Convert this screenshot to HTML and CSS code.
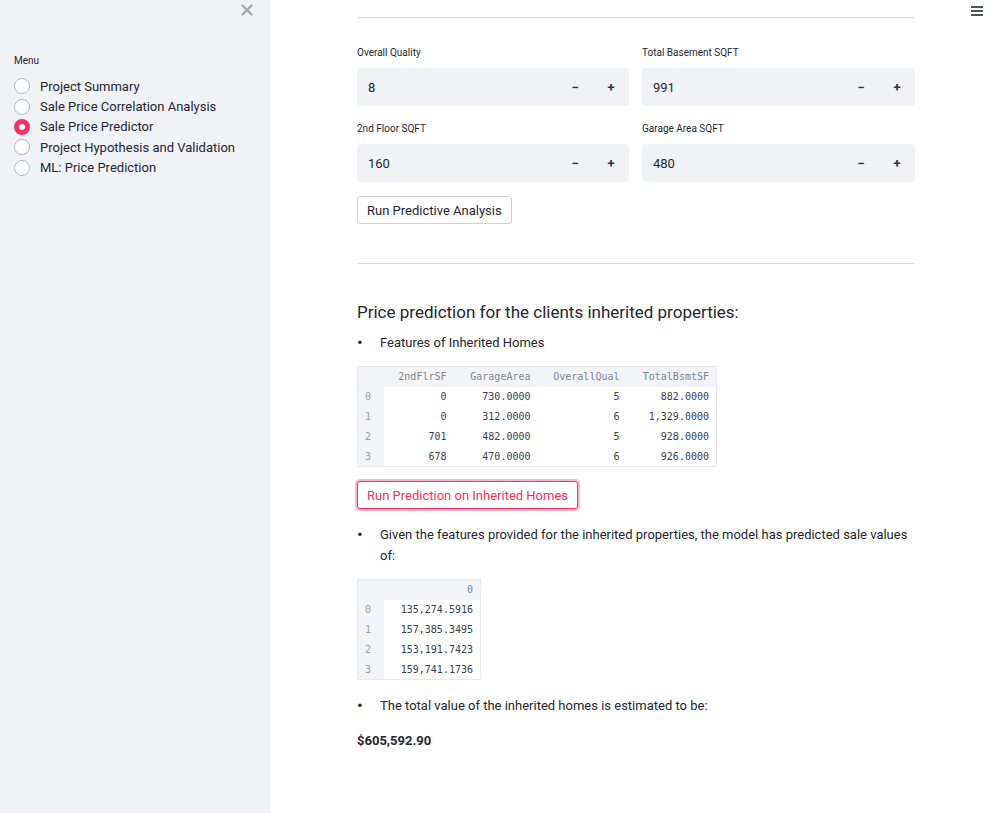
FILE: index.html
```html
<!DOCTYPE html>
<html>
<head>
<meta charset="utf-8">
<link rel="stylesheet" href="styles.css">
</head>
<body>
<div class="app">
  <aside class="sidebar">
    <div class="close-row">
      <svg class="close" width="12" height="12" viewBox="0 0 12 12"><path d="M1.5 1.5 L10.5 10.5 M10.5 1.5 L1.5 10.5" stroke="#a3a8b8" stroke-width="2.4" stroke-linecap="round"/></svg>
    </div>
    <div class="menu-label">Menu</div>
    <div class="radios">
      <div class="radio"><span class="dot"></span><span>Project Summary</span></div>
      <div class="radio"><span class="dot"></span><span>Sale Price Correlation Analysis</span></div>
      <div class="radio"><span class="dot active"></span><span>Sale Price Predictor</span></div>
      <div class="radio"><span class="dot"></span><span>Project Hypothesis and Validation</span></div>
      <div class="radio"><span class="dot"></span><span>ML: Price Prediction</span></div>
    </div>
  </aside>
  <main class="main">
    <div class="hamburger"><span></span><span></span><span></span></div>
    <div class="content">
      <hr class="rule first">
      <div class="grid">
        <div class="field">
          <div class="label">Overall Quality</div>
          <div class="numinput"><div class="val">8</div><div class="step">−</div><div class="step">+</div></div>
        </div>
        <div class="field">
          <div class="label">Total Basement SQFT</div>
          <div class="numinput"><div class="val">991</div><div class="step">−</div><div class="step">+</div></div>
        </div>
        <div class="field">
          <div class="label">2nd Floor SQFT</div>
          <div class="numinput"><div class="val">160</div><div class="step">−</div><div class="step">+</div></div>
        </div>
        <div class="field">
          <div class="label">Garage Area SQFT</div>
          <div class="numinput"><div class="val">480</div><div class="step">−</div><div class="step">+</div></div>
        </div>
      </div>
      <button class="btn">Run Predictive Analysis</button>
      <hr class="rule second">
      <h3 class="heading">Price prediction for the clients inherited properties:</h3>
      <div class="bullet b1"><span class="mark">•</span><span>Features of Inherited Homes</span></div>
      <table class="df df1">
        <thead><tr><th class="idx"></th><th>2ndFlrSF</th><th>GarageArea</th><th>OverallQual</th><th>TotalBsmtSF</th></tr></thead>
        <tbody>
          <tr><th class="idx">0</th><td>0</td><td>730.0000</td><td>5</td><td>882.0000</td></tr>
          <tr><th class="idx">1</th><td>0</td><td>312.0000</td><td>6</td><td>1,329.0000</td></tr>
          <tr><th class="idx">2</th><td>701</td><td>482.0000</td><td>5</td><td>928.0000</td></tr>
          <tr><th class="idx">3</th><td>678</td><td>470.0000</td><td>6</td><td>926.0000</td></tr>
        </tbody>
      </table>
      <button class="btn btn-pink">Run Prediction on Inherited Homes</button>
      <div class="bullet b2"><span class="mark">•</span><span>Given the features provided for the inherited properties, the model has predicted sale values of:</span></div>
      <table class="df df2">
        <thead><tr><th class="idx"></th><th>0</th></tr></thead>
        <tbody>
          <tr><th class="idx">0</th><td>135,274.5916</td></tr>
          <tr><th class="idx">1</th><td>157,385.3495</td></tr>
          <tr><th class="idx">2</th><td>153,191.7423</td></tr>
          <tr><th class="idx">3</th><td>159,741.1736</td></tr>
        </tbody>
      </table>
      <div class="bullet b3"><span class="mark">•</span><span>The total value of the inherited homes is estimated to be:</span></div>
      <div class="total">$605,592.90</div>
    </div>
  </main>
</div>
</body>
</html>
```

FILE: styles.css
```css
* { box-sizing: border-box; }
html, body { margin: 0; padding: 0; height: 100%; }
body {
  font-family: Roboto, "Noto Sans", "Liberation Sans", sans-serif;
  color: #262730;
  background: #fff;
  font-size: 13px;
}
.app { display: flex; min-height: 813px; }
.sidebar {
  width: 270px;
  flex: 0 0 270px;
  background: #f0f2f6;
  padding: 0 14px;
}
.close-row { display: flex; justify-content: flex-end; padding-top: 4px; padding-right: 3px; height: 17px; }
.menu-label { margin-top: 38px; font-size: 10px; color: #262730; line-height: 12px; }
.radios { margin-top: 9px; display: flex; flex-direction: column; }
.radio { display: flex; align-items: center; height: 20.4px; font-size: 13px; }
.dot {
  width: 16px; height: 16px; border-radius: 50%;
  border: 1px solid #b5b8c0; background: #fff; margin-right: 10px; flex: 0 0 16px;
}
.dot.active { border: 5px solid #f63366; background: #fff; }

.main { flex: 1; position: relative; }
.hamburger { position: absolute; right: 13px; top: 6px; width: 12px; display: flex; flex-direction: column; gap: 2px; }
.hamburger span { display: block; height: 2px; background: #50535c; }
.content { width: 558px; margin-left: 87px; padding-top: 17px; }
.rule { border: 0; border-top: 1px solid #d9dadf; margin: 0; }
.grid { display: grid; grid-template-columns: 272px 273px; column-gap: 13px; margin-top: 29px; row-gap: 17px; }
.label { font-size: 10px; line-height: 12px; margin-bottom: 9px; }
.numinput { display: flex; height: 38px; background: #f0f2f6; border-radius: 4px; }
.val { flex: 1; padding-left: 11px; display: flex; align-items: center; font-size: 13px; }
.step { width: 36px; display: flex; align-items: center; justify-content: center; font-weight: 700; font-size: 13px; color: #31333f; }
.btn {
  font-family: inherit; font-size: 13px; color: #262730;
  background: #fff; border: 1px solid #d0d2d8; border-radius: 3px;
  height: 28px; padding: 0 9px; margin-top: 14px; display: block; cursor: pointer;
}
.rule.second { margin-top: 39px; }
.heading { font-size: 17px; font-weight: 400; margin: 37px 0 0; line-height: 22px; }
.bullet { display: flex; line-height: 21px; font-size: 13px; }
.bullet .mark { width: 23px; flex: 0 0 23px; padding-left: 0; font-size: 17px; }
.b1 { margin-top: 9px; }
.df { border-collapse: collapse; font-family: "DejaVu Sans Mono", "Liberation Mono", monospace; font-size: 10px; border: 1px solid #e6e8ee; }
.df th, .df td { height: 20px; padding: 0 7px; text-align: right; font-weight: 400; }
.df thead th { background: #f3f4f7; color: #808390; height: 20px; }
.df th.idx { background: #f3f4f7; color: #9a9da5; width: 26px; text-align: left; padding-left: 7px; }
.df td { color: #3c3e48; background: #fff; }
.df1 { margin-top: 13px; }
.df1 thead th:nth-child(2) { width: 70px; }
.df1 thead th:nth-child(3) { width: 84px; }
.df1 thead th:nth-child(4) { width: 89px; }
.df1 thead th:nth-child(5) { width: 90px; }
.df2 thead th:nth-child(2) { width: 97px; }
.btn-pink {
  margin-top: 14px; border-color: #f63366; color: #f63366;
  box-shadow: 0 0 0 2px rgba(246, 51, 102, 0.35);
}
.b2 { margin-top: 15px; }
.df2 { margin-top: 13px; }
.b3 { margin-top: 15px; }
.total { font-weight: 700; margin-top: 14px; font-size: 13px; line-height: 21px; }
```
